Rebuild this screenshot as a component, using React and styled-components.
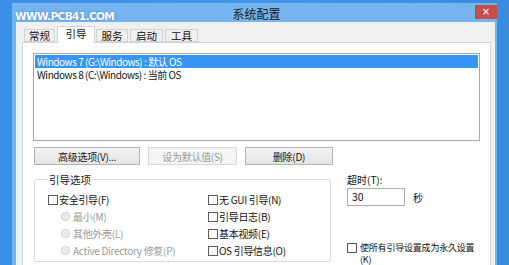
import React from 'react';
import styled, { createGlobalStyle } from 'styled-components';

const GlobalStyle = createGlobalStyle`
  html, body {
    margin: 0;
    padding: 0;
    background: #3a8ce3;
    overflow: hidden;
  }
  body {
    font-family: "Noto Sans CJK SC", "Noto Sans", sans-serif;
    font-size: 10px;
    color: #111;
  }
`;

const Desktop = styled.div`
  width: 509px;
  height: 265px;
  background: linear-gradient(90deg, #3b8fe6 0%, #4596e8 50%, #3a8ae0 100%);
  padding: 3px 12px 0 12px;
  box-sizing: border-box;
  position: relative;
  overflow: hidden;
`;

const Watermark = styled.div`
  position: absolute;
  left: 15px;
  top: 10px;
  font-family: "DejaVu Sans", "Liberation Sans", sans-serif;
  font-weight: bold;
  font-size: 10.5px;
  letter-spacing: -0.6px;
  color: #ffffff;
  text-shadow: 0 0 2px rgba(40, 90, 160, 0.6);
`;

const Window = styled.div`
  width: 485px;
  height: 262px;
  background: #76b4f0;
  padding: 0 2px 0 4px;
  box-sizing: border-box;
  display: flex;
  flex-direction: column;
`;

const TitleBar = styled.div`
  height: 25px;
  display: flex;
  align-items: flex-start;
`;

const Title = styled.div`
  flex: 1;
  text-align: center;
  padding-top: 2px;
  padding-left: 22px;
  font-size: 12px;
  color: #1b1b1b;
`;

const CloseButton = styled.div`
  width: 22px;
  height: 14px;
  margin-top: 2px;
  margin-right: -2px;
  background: #c74c4c;
  color: #fff;
  font-size: 10px;
  line-height: 14px;
  text-align: center;
  font-family: "DejaVu Sans", sans-serif;
`;

const Body = styled.div`
  flex: 1;
  background: #f0f0f0;
  padding: 4px 4px 0 6px;
  display: flex;
  flex-direction: column;
`;

const TabStrip = styled.div`
  display: flex;
  align-items: flex-end;
  height: 16px;
  padding-left: 2px;
  position: relative;
  z-index: 1;
`;

const Tab = styled.div`
  height: ${({ active }) => (active ? '17px' : '13px')};
  margin-bottom: ${({ active }) => (active ? '-1px' : '0')};
  width: ${({ w }) => w}px;
  margin-right: ${({ active }) => (active ? '1px' : '2px')};
  border: 1px solid #d4d4d4;
  border-bottom: ${({ active }) => (active ? 'none' : '1px solid #d4d4d4')};
  background: ${({ active }) => (active ? '#ffffff' : '#efefef')};
  box-sizing: border-box;
  display: flex;
  align-items: ${({ active }) => (active ? 'flex-start' : 'center')};
  padding-top: ${({ active }) => (active ? '1px' : '0')};
  justify-content: center;
  font-size: 10.5px;
  line-height: 12px;
`;

const Panel = styled.div`
  flex: 1;
  background: #ffffff;
  border: 1px solid #d4d4d4;
  border-bottom: none;
  padding: 10px 10px 0 10px;
  display: flex;
  flex-direction: column;
`;

const ListBox = styled.div`
  height: 88px;
  border: 1px solid #a8a8a8;
  box-sizing: border-box;
  padding: 1px;
`;

const ListRow = styled.div`
  height: 13px;
  line-height: 13px;
  padding-left: 2px;
  font-size: 10px;
  letter-spacing: -0.45px;
  background: ${({ selected }) => (selected ? '#3796f4' : 'transparent')};
  color: ${({ selected }) => (selected ? '#ffffff' : '#141414')};
`;

const ButtonRow = styled.div`
  display: flex;
  gap: 8px;
  margin-top: 6px;
  padding-left: 1px;
`;

const Button = styled.div`
  width: ${({ w }) => w}px;
  height: 18px;
  box-sizing: border-box;
  border: 1px solid ${({ disabled }) => (disabled ? '#d6d6d6' : '#b4b4b4')};
  background: ${({ disabled }) => (disabled ? '#f4f4f4' : 'linear-gradient(#f2f2f2, #e4e4e4)')};
  color: ${({ disabled }) => (disabled ? '#9a9a9a' : '#1a1a1a')};
  display: flex;
  align-items: center;
  justify-content: center;
  font-size: 10px;
  letter-spacing: -0.3px;
`;

const Bottom = styled.div`
  display: flex;
  margin-top: 7px;
  padding-left: 1px;
`;

const GroupBox = styled.fieldset`
  width: 299px;
  margin: 0;
  padding: 4px 0 0 13px;
  box-sizing: border-box;
  border: 1px solid #dcdcdc;
  border-radius: 2px;
  height: 90px;
  display: grid;
  grid-template-columns: 160px 1fr;
  grid-auto-rows: 17px;
  align-content: start;
`;

const Legend = styled.legend`
  padding: 0 1px;
  margin-left: 0;
  font-size: 10.5px;
  color: #222;
`;

const Option = styled.div`
  display: flex;
  align-items: center;
  gap: 1px;
  padding-left: ${({ indent }) => (indent ? '13px' : '0')};
  color: ${({ disabled }) => (disabled ? '#9b9b9b' : '#141414')};
  font-size: 10px;
  letter-spacing: -0.3px;
  white-space: nowrap;
`;

const Check = styled.span`
  width: 10px;
  height: 10px;
  box-sizing: border-box;
  border: 1px solid #5c5c5c;
  background: #fff;
  flex-shrink: 0;
`;

const Radio = styled.span`
  width: 9px;
  height: 9px;
  box-sizing: border-box;
  border-radius: 50%;
  border: 1px solid #c8c8c8;
  background: radial-gradient(circle, #e6e6e6 0%, #f6f6f6 100%);
  flex-shrink: 0;
  margin-right: 2px;
`;

const RightCol = styled.div`
  margin-left: 16px;
  display: flex;
  flex-direction: column;
`;

const Label = styled.div`
  font-size: 10px;
  line-height: 12px;
  margin-top: 2px;
`;

const InputRow = styled.div`
  display: flex;
  align-items: center;
  gap: 8px;
  margin-top: 2px;
`;

const TextInput = styled.div`
  width: 58px;
  height: 18px;
  box-sizing: border-box;
  border: 1px solid #ababab;
  background: #fff;
  padding-left: 4px;
  font-size: 10.5px;
  line-height: 16px;
`;

const PermanentOption = styled.div`
  display: flex;
  align-items: flex-start;
  gap: 3px;
  margin-top: 36px;
  font-size: 9px;
  line-height: 12px;
  letter-spacing: -0.2px;
`;

const PermanentText = styled.span`
  width: 120px;
`;

const CheckTop = styled(Check)`
  margin-top: 1px;
`;

export default function App() {
  return (
    <>
      <GlobalStyle />
      <Desktop>
        <Watermark>WWW.PCB41.COM</Watermark>
        <Window>
          <TitleBar>
            <Title>系统配置</Title>
            <CloseButton>×</CloseButton>
          </TitleBar>
          <Body>
            <TabStrip>
              <Tab w={31}>常规</Tab>
              <Tab w={38} active>引导</Tab>
              <Tab w={32}>服务</Tab>
              <Tab w={33}>启动</Tab>
              <Tab w={33}>工具</Tab>
            </TabStrip>
            <Panel>
              <ListBox>
                <ListRow selected>Windows 7 (G:\Windows) : 默认 OS</ListRow>
                <ListRow>Windows 8 (C:\Windows) : 当前 OS</ListRow>
              </ListBox>
              <ButtonRow>
                <Button w={106}>高级选项(V)...</Button>
                <Button w={89} disabled>设为默认值(S)</Button>
                <Button w={88}>删除(D)</Button>
              </ButtonRow>
              <Bottom>
                <GroupBox>
                  <Legend>引导选项</Legend>
                  <Option><Check />安全引导(F)</Option>
                  <Option><Check />无 GUI 引导(N)</Option>
                  <Option indent disabled><Radio />最小(M)</Option>
                  <Option><Check />引导日志(B)</Option>
                  <Option indent disabled><Radio />其他外壳(L)</Option>
                  <Option><Check />基本视频(E)</Option>
                  <Option indent disabled><Radio />Active Directory 修复(P)</Option>
                  <Option><Check />OS 引导信息(O)</Option>
                </GroupBox>
                <RightCol>
                  <Label>超时(T):</Label>
                  <InputRow>
                    <TextInput>30</TextInput>
                    <span>秒</span>
                  </InputRow>
                  <PermanentOption>
                    <CheckTop />
                    <PermanentText>使所有引导设置成为永久设置 (K)</PermanentText>
                  </PermanentOption>
                </RightCol>
              </Bottom>
            </Panel>
          </Body>
        </Window>
      </Desktop>
    </>
  );
}
